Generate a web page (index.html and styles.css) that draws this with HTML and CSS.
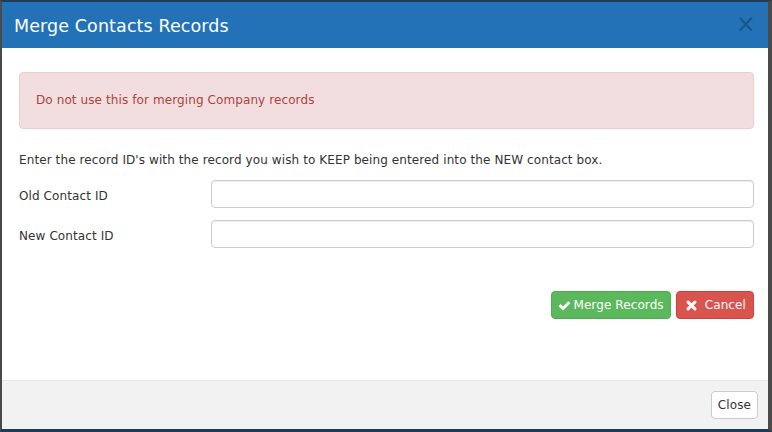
FILE: index.html
```html
<!DOCTYPE html>
<html lang="en">

<head>
    <meta charset="UTF-8">
    <title>Merge Contacts Records</title>

    <link rel="stylesheet" href="styles.css">
</head>

<body>
    <div id="frame">
        <div id="modal">
            <div class="modal-header">
                <h4 class="modal-title">Merge Contacts Records</h4>
                <span class="close">&times;</span>
            </div>
            <div class="modal-body">
                <div class="alert">Do not use this for merging Company records</div>
                <p class="intro">Enter the record ID's with the record you wish to KEEP being entered into the NEW contact box.</p>
                <div class="form-row">
                    <label for="old-id">Old Contact ID</label>
                    <input type="text" id="old-id">
                </div>
                <div class="form-row">
                    <label for="new-id">New Contact ID</label>
                    <input type="text" id="new-id">
                </div>
                <div class="actions">
                    <button class="btn btn-success">
                        <svg class="ico" viewBox="0 0 16 16" width="13" height="13">
                            <path d="M0.8 8.8 L3.3 6.3 L6.2 9.2 L12.7 2.7 L15.2 5.2 L6.2 14.2 Z" fill="#fff" />
                        </svg>Merge Records
                    </button>
                    <button class="btn btn-danger">
                        <svg class="ico ico-x" viewBox="0 0 16 16" width="11" height="11">
                            <path d="M3 3 L13 13 M13 3 L3 13" stroke="#fff" stroke-width="4.4" stroke-linecap="round" />
                        </svg>Cancel
                    </button>
                </div>
            </div>
            <div class="modal-footer">
                <button class="btn btn-default">Close</button>
            </div>
        </div>
    </div>
</body>

</html>
```
FILE: styles.css
```css
body,
html {
    width: 100%;
    height: 100%;
    margin: 0;
    padding: 0;
    overflow: hidden;
}

body {
    background: #3f4a55;
    font-family: Verdana, 'DejaVu Sans', sans-serif;
    font-size: 12px;
    letter-spacing: 0.1px;
    color: #333;
}

#frame {
    box-sizing: border-box;
    height: 432px;
    border-top: 2px solid #1f3c5a;
    border-left: 2px solid #4a4a4a;
    border-right: 4px solid #4a4a4a;
    border-bottom: 3px solid #1d3a56;
}

#modal {
    background: #fff;
    height: 100%;
    display: flex;
    flex-direction: column;
}

.modal-header {
    background: #2372b7;
    height: 46px;
    display: flex;
    align-items: center;
    justify-content: space-between;
    padding: 0 12px 0 12px;
    box-sizing: border-box;
}

.modal-title {
    margin: 1px 0 0;
    color: #fff;
    font-size: 17.5px;
    font-weight: normal;
}

.close {
    color: #000;
    opacity: 0.25;
    font-size: 24px;
    line-height: 1;
    margin-top: -2px;
}

.modal-body {
    flex: 1;
    padding: 24px 14px 0 17px;
}

.alert {
    background: #f2dede;
    border: 1px solid #ebccd1;
    color: #a94442;
    border-radius: 4px;
    padding: 0 16px;
    height: 55px;
    line-height: 54px;
}

.intro {
    margin: 23px 0 11px;
    line-height: 17px;
}

.form-row {
    display: flex;
    align-items: center;
    margin-bottom: 12px;
}

.form-row label {
    width: 192px;
    padding-top: 3px;
}

.form-row input {
    flex: 1;
    height: 28px;
    box-sizing: border-box;
    border: 1px solid #ccc;
    border-radius: 4px;
    box-shadow: inset 0 1px 1px rgba(0, 0, 0, 0.075);
}

.actions {
    display: flex;
    justify-content: flex-end;
    gap: 5px;
    margin-top: 43px;
}

.btn {
    font-family: Verdana, 'DejaVu Sans', sans-serif;
    font-size: 12px;
    letter-spacing: 0.1px;
    height: 28px;
    border-radius: 4px;
    border: 1px solid transparent;
    padding: 0 6px;
    display: flex;
    align-items: center;
    cursor: pointer;
}

.btn-success {
    background: #5cb85c;
    border-color: #4cae4c;
    color: #fff;
}

.btn-danger {
    background: #d9534f;
    border-color: #d43f3a;
    color: #fff;
    padding: 0 7px 0 9px;
}

.btn-default {
    background: #fff;
    border-color: #ccc;
    color: #333;
    padding: 0 6px;
}

.ico {
    margin-right: 2px;
}

.ico-x {
    margin-right: 8px;
}

.modal-footer {
    background: #f2f2f2;
    border-top: 1px solid #e5e5e5;
    height: 49px;
    box-sizing: border-box;
    display: flex;
    align-items: center;
    justify-content: flex-end;
    padding: 0 10px 0 0;
}
```
